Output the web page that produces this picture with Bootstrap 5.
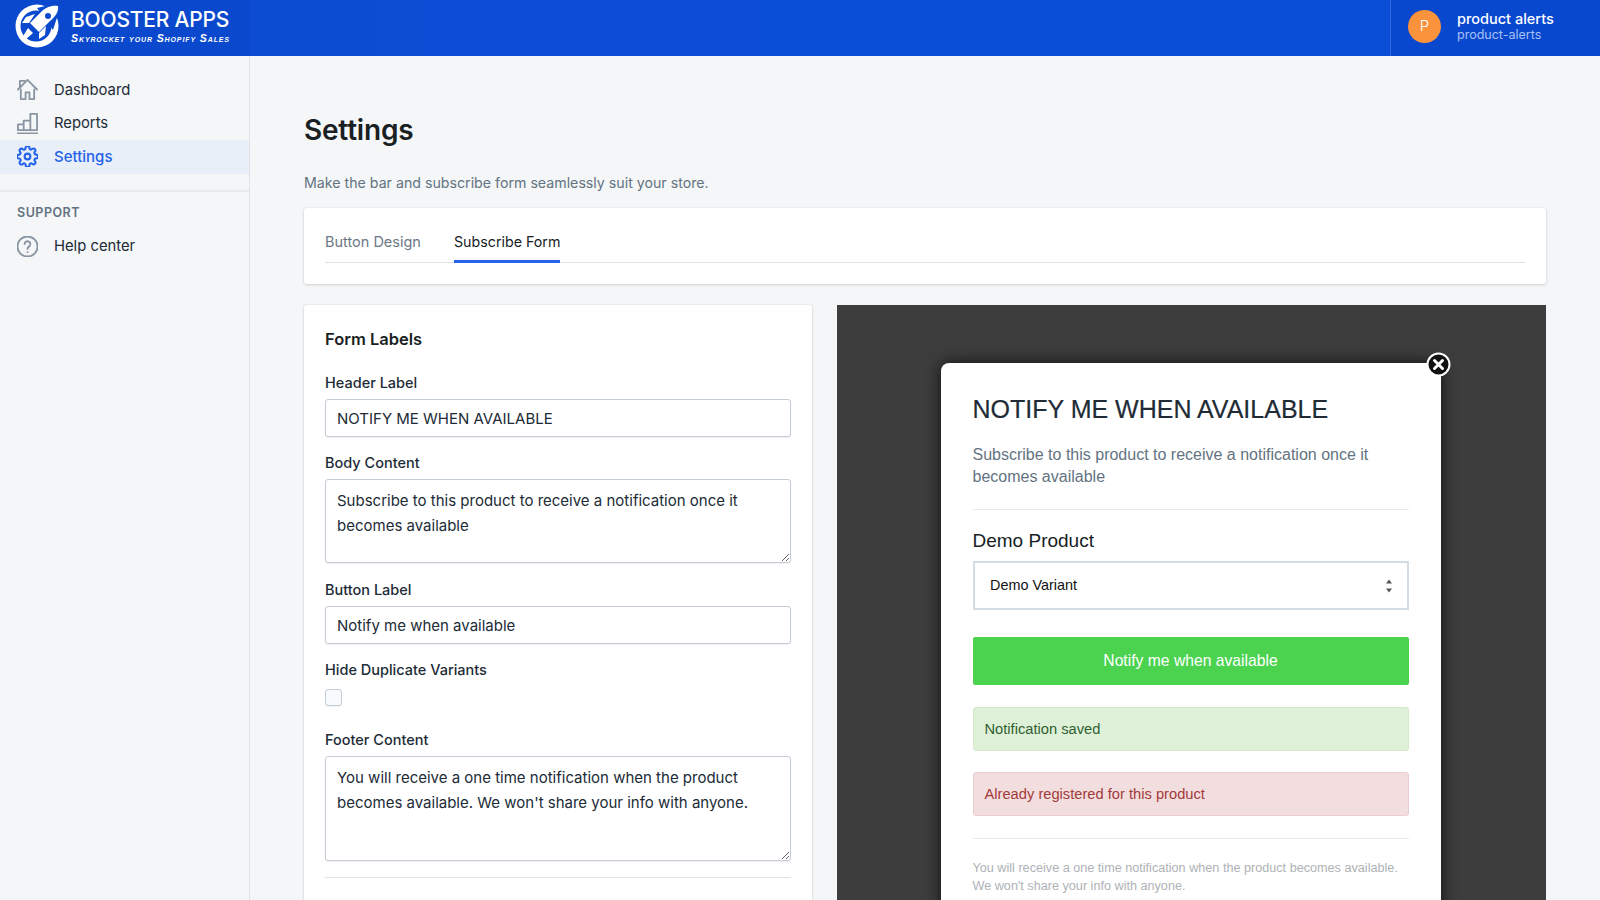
<!DOCTYPE html>
<html lang="en">
<head>
<meta charset="utf-8">
<title>Settings</title>
<link href="https://cdn.jsdelivr.net/npm/bootstrap@5.3.0/dist/css/bootstrap.min.css" rel="stylesheet">
<style>
html,body{height:900px;overflow:hidden}
body{background:#f4f6f8;font-family:Inter,"Liberation Sans",sans-serif;color:#212b36;font-size:14.5px}
.topbar{height:56px;background:linear-gradient(90deg,#0a49cd 0,#0a49cd 250px,#0b4cd3 250px,#0a4fd8 100%);color:#fff}
.brand-area{width:250px;padding-left:15px;gap:10px;padding-bottom:4px}
.brand-name{font-size:21px;font-weight:500;line-height:22px;letter-spacing:-.2px;white-space:nowrap;padding-top:1px}
.brand-tag{font:italic 700 10.6px/12px "Liberation Sans",sans-serif;font-variant:small-caps;letter-spacing:.88px;white-space:nowrap;margin-top:1px}
.shop-area{width:210px;border-left:1px solid #2f6ade;background:#0848cf;padding:0 0 4px 17px;gap:16px}
.avatar-dot{width:33px;height:33px;border-radius:50%;background:#fb923c;font-size:15px;color:#fff;font-weight:300}
.shop-name{font-size:14.5px;font-weight:500;line-height:17px}
.shop-handle{font-size:12.5px;line-height:16px;color:#a9c1f3}
.side{width:250px;height:844px;border-right:1px solid #dfe3e8;padding-top:17px;flex:none}
.side-link{height:33.6px;padding:0 0 0 17px;gap:16px;color:#212b36;font-size:14.8px;font-weight:400}
.side-link svg{width:21px;height:21px;flex:none;fill:none;stroke:#8a95a3;stroke-width:1.9;stroke-linecap:round;stroke-linejoin:round}
.side-link.on{background:#e8eff8;color:#2563eb;font-weight:500;font-size:15px}
.side-link.on svg{stroke:#2563eb;stroke-width:2.200}
.side-sep{border-top:2px solid #e6e9ed;margin:16px 0 13px}
.side-head{padding-left:17px;font-size:12.5px;font-weight:600;letter-spacing:.5px;color:#637381;margin-bottom:9px;line-height:16px}
.main-pane{padding:55px 54px 0;min-width:0}
.page-title{font-size:28px;font-weight:600;line-height:38px;margin:0 0 24px;color:#1a1f24;letter-spacing:-.2px}
.page-sub{font-size:14.2px;line-height:19px;color:#637381;margin:0 0 16px}
.panel{background:#fff;border:0;border-radius:3px;box-shadow:0 1px 3px rgba(63,63,68,.18),0 0 0 1px rgba(63,63,68,.03)}
.tab-panel{height:76px;padding:13px 21px 0;margin-bottom:21px}
.tabs-line{border-bottom:1px solid #dfe3e8;gap:33px;height:42px}
.tab-item{height:42px;font-size:14.5px;color:#6b7785;padding:0;line-height:41px;border-bottom:3px solid transparent;margin:0;font-weight:400}
.tab-item.on{color:#161d25;border-bottom-color:#2563eb;font-size:14.25px}
.work-area{gap:25px;align-items:flex-start}
.form-panel{width:508px;height:640px;padding:22px 21px;flex:none}
.form-head{font-size:16.500px;font-weight:600;line-height:24px;margin:0 0 22px;color:#1a1f24}
.field-label{font-size:14.5px;font-weight:500;line-height:20px;margin:0 0 6px;display:block;color:#212b36}
.field-box{font-size:15px;line-height:25.4px;color:#212b36;border:1px solid #c4cdd5;border-radius:3px;padding:5.5px 11px;height:38px;margin-bottom:16px;box-shadow:0 1px 1px rgba(0,0,0,.06)}
textarea.field-box{height:84px;padding-top:8px;padding-bottom:7px;margin-bottom:17px}
textarea.field-foot{height:105px;margin-bottom:16px}
.form-panel input.field-check{width:17px;height:17px;border:1px solid #c4cdd5;border-radius:3px;background:#f9fafb;margin:9px 0 24px;display:block;box-shadow:0 1px 1px rgba(0,0,0,.06)}
.form-rule{border-top:1px solid #dfe3e8;opacity:1;margin:0}
.preview-pane{flex:1;height:640px;background:#3d3d3d;overflow:hidden;padding:58px 2px 0 0;position:relative}
.pop{width:500px;height:600px;margin:0 auto;background:#fff;border-radius:8px 8px 0 0;padding:28px 32px 0 32px;box-shadow:0 0 16px rgba(0,0,0,.75);position:relative;font-family:"Liberation Sans",Arial,sans-serif}
.pop-x{position:absolute;top:-11px;right:-10px;width:25px;height:25px}
.pop-title{font-size:25px;line-height:36px;font-weight:400;margin:0 0 17px;color:#212b36;-webkit-text-stroke:.2px #212b36}
.pop-text{font-size:16px;line-height:21.8px;color:#637381;margin:0 0 21.7px}
.pop-rule{border-top:1px solid #e8eaed;opacity:1;margin:0}
.pop-prod{font-size:19px;line-height:28px;margin:17px 0 6px;color:#161d25}
.pop-sel{height:49px;border:2px solid #d3dbe4;border-radius:0;padding:0 15.5px;font-size:14.4px;color:#111;background-size:12px 16px;background-position:right 12px center;box-shadow:none;font-family:inherit;margin-bottom:26.5px;background-image:url("data:image/svg+xml,%3Csvg xmlns='http://www.w3.org/2000/svg' viewBox='0 0 12 16'%3E%3Cpath fill='%23555' d='M6 1.5 9 5.5H3zM6 14.500 3 10.500h6z'/%3E%3C/svg%3E")}
.pop-btn{height:48px;background:#4bd34f;border:0;border-radius:2px;color:#fff;font-size:15.7px;width:100%;display:block;padding:0;margin-bottom:22px}
.pop-note{height:44px;padding:0 11px;font-size:14.7px;line-height:42px;border-radius:3px;margin-bottom:21px;border:1px solid}
.pop-ok{background:#dff0d8;border-color:#d5e9c9;color:#2f5f2f}
.pop-bad{background:#f2dede;border-color:#ecccd1;color:#a33a3a;margin-bottom:22px}
.pop-foot{font-size:12.65px;line-height:18px;color:#aeb2b6;margin:20px 0 0}
.brand-mark{width:46px;height:46px;flex:none;overflow:visible}
</style>
</head>
<body>
<header class="topbar d-flex align-items-stretch">
  <div class="brand-area d-flex align-items-center">
    <svg class="brand-mark" viewBox="0 0 46 46" role="img" aria-label="Booster Apps logo">
      <circle cx="22" cy="23" r="21.500" fill="#fff"/>
      <circle cx="21" cy="23" r="15.500" fill="#0a49cd"/>
      <path d="M47 -1 22 5l16 22z" fill="#0a49cd"/>
      <path d="M43 3C36 2 30 5 26 9L15 20l9 9 11-11c5-4 9-9 8-15z" fill="#fff"/>
      <circle cx="33" cy="13" r="3" fill="#0a49cd"/>
      <path d="M20 11 11 14 7 20h7zM31 23l-1 9-6 4v-6zM13 25l5 5-8 7-3-2z" fill="#fff"/>
    </svg>
    <div>
      <div class="brand-name">BOOSTER APPS</div>
      <div class="brand-tag">Skyrocket your Shopify Sales</div>
    </div>
  </div>
  <div class="flex-grow-1"></div>
  <div class="shop-area d-flex align-items-center">
    <div class="avatar-dot d-flex align-items-center justify-content-center">P</div>
    <div>
      <div class="shop-name">product alerts</div>
      <div class="shop-handle">product-alerts</div>
    </div>
  </div>
</header>
<div class="d-flex">
  <aside class="side">
    <nav class="nav flex-column">
      <a class="nav-link side-link d-flex align-items-center" href="#">
        <svg viewBox="1 1 22 22"><path d="M2 12 12 2l10 10M4 9V3h5M5 12v10h5v-7h4v7h5V12"/></svg>Dashboard</a>
      <a class="nav-link side-link d-flex align-items-center" href="#">
        <svg viewBox="1 1 22 22"><path d="M1.500 22.500h21M2 19v-6h6v6zM8 19V9h7v10zM15 19V2h7v17z"/></svg>Reports</a>
      <a class="nav-link side-link on d-flex align-items-center" href="#">
        <svg viewBox="1 1 22 22"><path d="M12 15a3 3 0 1 0 0-6 3 3 0 0 0 0 6z"/><path d="M19.400 15a1.650 1.650 0 0 0 .33 1.820l.06.06a2 2 0 0 1 0 2.830 2 2 0 0 1-2.830 0l-.06-.06a1.650 1.650 0 0 0-1.820-.33 1.650 1.650 0 0 0-1 1.510V21a2 2 0 0 1-2 2 2 2 0 0 1-2-2v-.09A1.650 1.650 0 0 0 9 19.400a1.650 1.650 0 0 0-1.820.33l-.06.06a2 2 0 0 1-2.830 0 2 2 0 0 1 0-2.830l.06-.06a1.650 1.650 0 0 0 .33-1.820 1.650 1.650 0 0 0-1.510-1H3a2 2 0 0 1-2-2 2 2 0 0 1 2-2h.09A1.650 1.650 0 0 0 4.600 9a1.650 1.650 0 0 0-.33-1.820l-.06-.06a2 2 0 0 1 0-2.830 2 2 0 0 1 2.830 0l.06.06a1.650 1.650 0 0 0 1.820.33H9a1.650 1.650 0 0 0 1-1.510V3a2 2 0 0 1 2-2 2 2 0 0 1 2 2v.09a1.650 1.650 0 0 0 1 1.510 1.650 1.650 0 0 0 1.820-.33l.06-.06a2 2 0 0 1 2.830 0 2 2 0 0 1 0 2.830l-.06.06a1.650 1.650 0 0 0-.33 1.820V9a1.650 1.650 0 0 0 1.510 1H21a2 2 0 0 1 2 2 2 2 0 0 1-2 2h-.09a1.650 1.650 0 0 0-1.510 1z"/></svg>Settings</a>
    </nav>
    <div class="side-sep"></div>
    <div class="side-head">SUPPORT</div>
    <nav class="nav flex-column">
      <a class="nav-link side-link d-flex align-items-center" href="#">
        <svg viewBox="1 1 22 22"><circle cx="12" cy="12" r="10.500"/><path d="M9 9.500a3 3 0 1 1 4.500 2.600c-1 .6-1.500 1.200-1.500 2.400M12 17.800v.1"/></svg>Help center</a>
    </nav>
  </aside>
  <main class="main-pane flex-grow-1">
    <h1 class="page-title">Settings</h1>
    <p class="page-sub">Make the bar and subscribe form seamlessly suit your store.</p>
    <div class="panel tab-panel">
      <div class="d-flex tabs-line">
        <div class="tab-item">Button Design</div>
        <div class="tab-item on">Subscribe Form</div>
      </div>
    </div>
    <div class="d-flex work-area">
      <section class="panel form-panel">
        <h2 class="form-head">Form Labels</h2>
        <label class="field-label">Header Label</label>
        <input class="form-control field-box" type="text" value="NOTIFY ME WHEN AVAILABLE">
        <label class="field-label">Body Content</label>
        <textarea class="form-control field-box">Subscribe to this product to receive a notification once it becomes available</textarea>
        <label class="field-label">Button Label</label>
        <input class="form-control field-box" type="text" value="Notify me when available">
        <label class="field-label">Hide Duplicate Variants</label>
        <input class="field-check form-check-input" type="checkbox">
        <label class="field-label">Footer Content</label>
        <textarea class="form-control field-box field-foot">You will receive a one time notification when the product becomes available. We won't share your info with anyone.</textarea>
        <hr class="form-rule">
      </section>
      <section class="preview-pane">
        <div class="pop">
          <svg class="pop-x" viewBox="0 0 25 25" aria-label="Close"><circle cx="12.500" cy="12.500" r="11" fill="#111" stroke="#fff" stroke-width="2"/><path d="M8.500 8.500l8 8M16.500 8.500l-8 8" stroke="#fff" stroke-width="3" stroke-linecap="round"/></svg>
          <h3 class="pop-title">NOTIFY ME WHEN AVAILABLE</h3>
          <p class="pop-text">Subscribe to this product to receive a notification once it becomes available</p>
          <hr class="pop-rule">
          <div class="pop-prod">Demo Product</div>
          <select class="form-select pop-sel"><option>Demo Variant</option></select>
          <button class="btn pop-btn" type="button">Notify me when available</button>
          <div class="pop-note pop-ok">Notification saved</div>
          <div class="pop-note pop-bad">Already registered for this product</div>
          <hr class="pop-rule">
          <p class="pop-foot">You will receive a one time notification when the product becomes available. We won't share your info with anyone.</p>
        </div>
      </section>
    </div>
  </main>
</div>
<script src="https://cdn.jsdelivr.net/npm/bootstrap@5.3.0/dist/js/bootstrap.bundle.min.js"></script>
</body>
</html>
